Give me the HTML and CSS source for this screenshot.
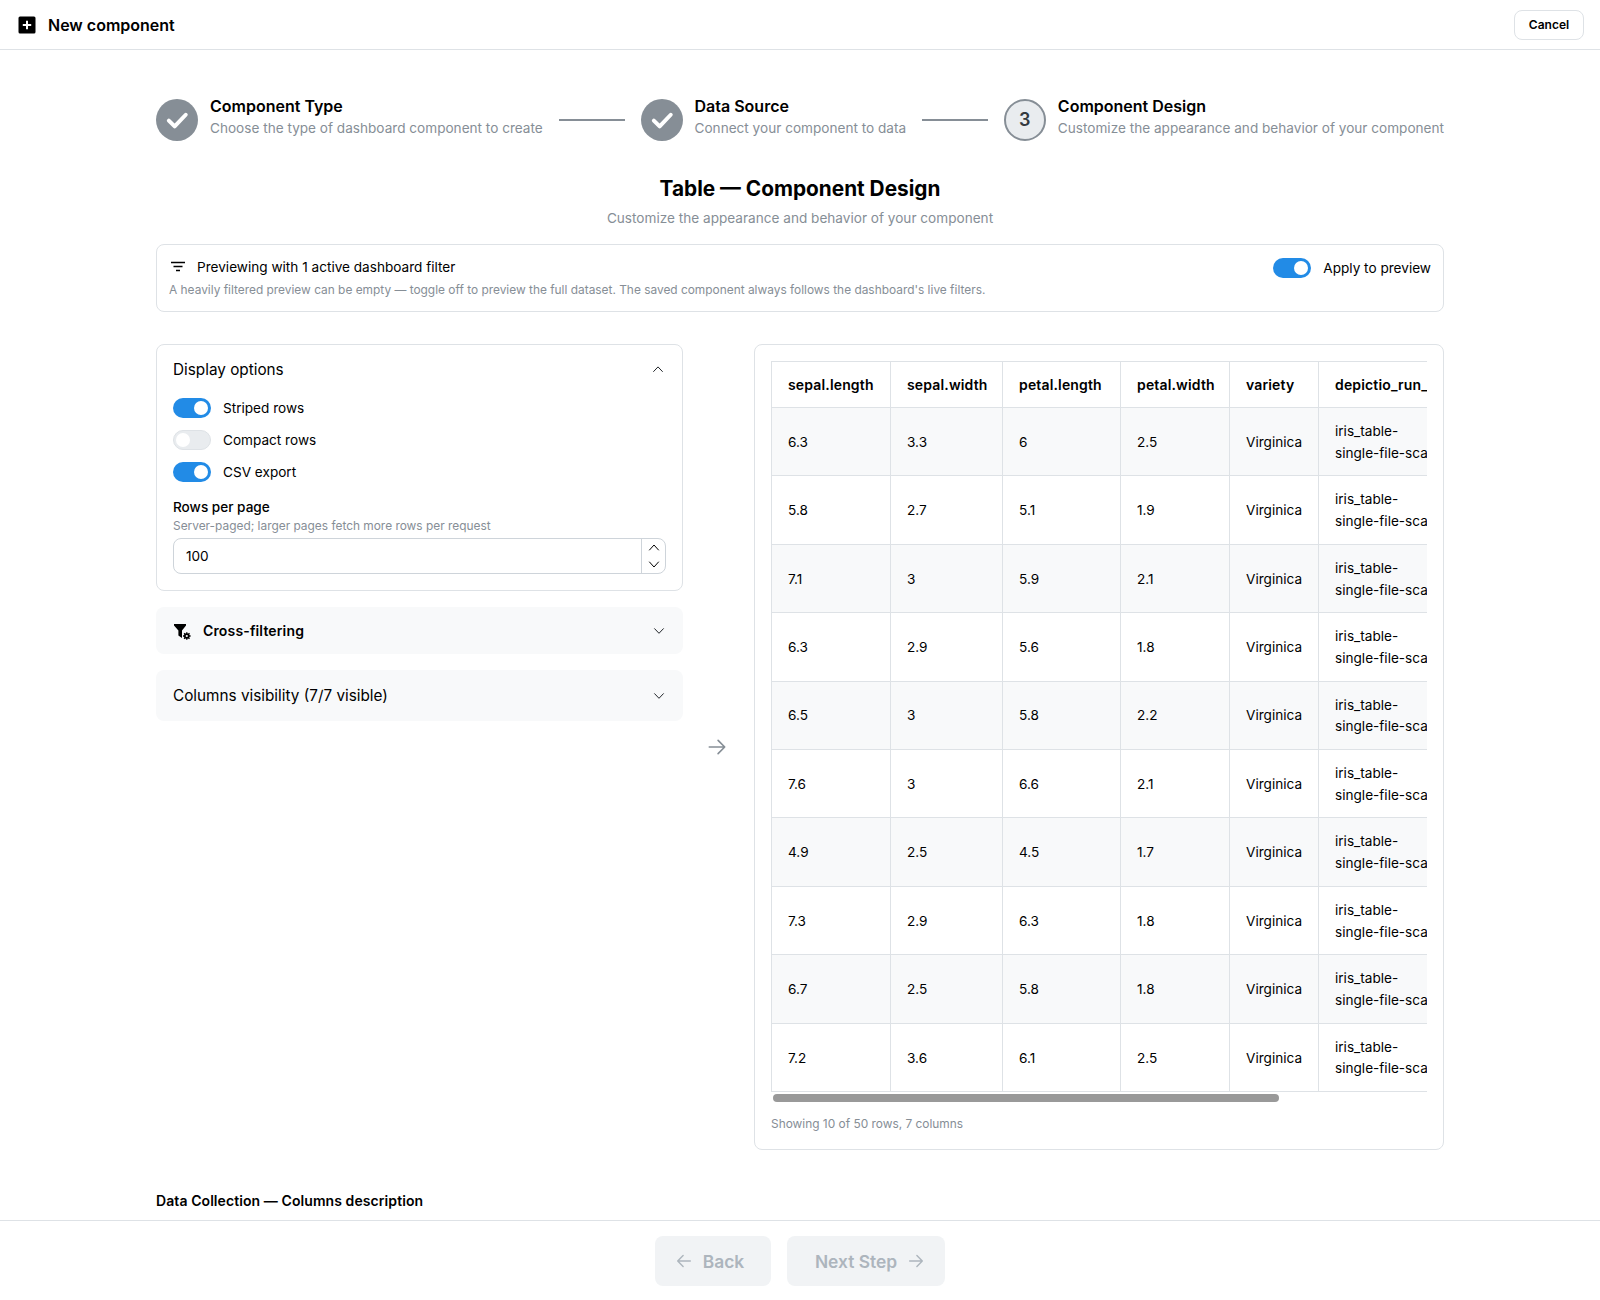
FILE: index.html
```html
<!DOCTYPE html>
<html lang="en">
<head>
<meta charset="utf-8">
<title>New component</title>
<link rel="stylesheet" href="styles.css">
</head>
<body>
<header class="topbar">
  <div class="topbar-title">
    <svg class="plus-icon" viewBox="0 0 18 18"><rect x="0.5" y="0.5" width="17" height="17" rx="1.5" fill="#000"/><path d="M9 4.8v8.4M4.8 9h8.4" stroke="#fff" stroke-width="2" fill="none"/></svg>
    <span>New component</span>
  </div>
  <button class="cancel">Cancel</button>
</header>
<main class="main">
  <div class="container">
    <div class="stepper">
      <div class="step">
        <span class="bullet done"><svg viewBox="0 0 24 24" class="check"><path d="M5 12.5l5 5L19.5 7.5" fill="none" stroke="#fff" stroke-width="3.4" stroke-linecap="round" stroke-linejoin="round"/></svg></span>
        <div class="step-text"><div class="step-title">Component Type</div><div class="step-desc">Choose the type of dashboard component to create</div></div>
      </div>
      <div class="connector"></div>
      <div class="step">
        <span class="bullet done"><svg viewBox="0 0 24 24" class="check"><path d="M5 12.5l5 5L19.5 7.5" fill="none" stroke="#fff" stroke-width="3.4" stroke-linecap="round" stroke-linejoin="round"/></svg></span>
        <div class="step-text"><div class="step-title">Data Source</div><div class="step-desc">Connect your component to data</div></div>
      </div>
      <div class="connector"></div>
      <div class="step">
        <span class="bullet current">3</span>
        <div class="step-text"><div class="step-title">Component Design</div><div class="step-desc">Customize the appearance and behavior of your component</div></div>
      </div>
    </div>

    <h1 class="heading">Table — Component Design</h1>
    <p class="subheading">Customize the appearance and behavior of your component</p>

    <section class="filter-box">
      <div class="filter-text">
        <div class="filter-line">
          <svg class="filter-icon" viewBox="0 0 16 12"><path d="M1 1.5h14M3.5 5.5h9M6 9.5h4" stroke="#000" stroke-width="1.5" fill="none"/></svg>
          <span>Previewing with 1 active dashboard filter</span>
        </div>
        <div class="filter-note">A heavily filtered preview can be empty — toggle off to preview the full dataset. The saved component always follows the dashboard's live filters.</div>
      </div>
      <div class="toggle-row"><span class="switch on"></span><span>Apply to preview</span></div>
    </section>

    <div class="design-grid">
      <div class="left-col">
        <section class="panel options">
          <div class="panel-head">
            <span class="panel-title">Display options</span>
            <svg class="chev chev-up" viewBox="0 0 16 16"><path d="M3.6 10.5l4.4-4.6 4.4 4.6" fill="none" stroke="#212529" stroke-width="1" stroke-linecap="round" stroke-linejoin="round"/></svg>
          </div>
          <div class="toggles">
            <div class="toggle-row"><span class="switch on"></span><span>Striped rows</span></div>
            <div class="toggle-row"><span class="switch off"></span><span>Compact rows</span></div>
            <div class="toggle-row"><span class="switch on"></span><span>CSV export</span></div>
          </div>
          <div class="field-label">Rows per page</div>
          <div class="field-desc">Server-paged; larger pages fetch more rows per request</div>
          <div class="number-input">
            <span class="number-value">100</span>
            <div class="number-steppers">
              <svg viewBox="0 0 16 16"><path d="M3.5 10.5l4.5-5 4.5 5" fill="none" stroke="#000" stroke-width="1" stroke-linecap="round" stroke-linejoin="round"/></svg>
              <svg viewBox="0 0 16 16"><path d="M3.5 5.5l4.5 5 4.5-5" fill="none" stroke="#000" stroke-width="1" stroke-linecap="round" stroke-linejoin="round"/></svg>
            </div>
          </div>
        </section>
        <section class="collapsed cross">
          <div class="cross-title">
            <svg class="cross-icon" viewBox="0 0 18 18"><path d="M1 2h12v1.4L9 8.4V16L5.4 13.4V8.4L1 3.4z" fill="#000"/><circle cx="13.8" cy="14" r="2.8" fill="#000"/><path d="M13.8 10.2v7.6M10 14h7.6M11.1 11.3l5.4 5.4M11.1 16.7l5.4-5.4" stroke="#000" stroke-width="1.3"/><circle cx="13.8" cy="14" r="1.1" fill="#f8f9fa"/></svg>
            <span>Cross-filtering</span>
          </div>
          <svg class="chev" viewBox="0 0 16 16"><path d="M3.6 5.7l4.4 4.6 4.4-4.6" fill="none" stroke="#212529" stroke-width="1" stroke-linecap="round" stroke-linejoin="round"/></svg>
        </section>
        <section class="collapsed columns">
          <span class="panel-title">Columns visibility (7/7 visible)</span>
          <svg class="chev" viewBox="0 0 16 16"><path d="M3.6 5.7l4.4 4.6 4.4-4.6" fill="none" stroke="#212529" stroke-width="1" stroke-linecap="round" stroke-linejoin="round"/></svg>
        </section>
      </div>

      <div class="arrow-col">
        <svg class="big-arrow" viewBox="0 0 20 20"><path d="M3 10h14M11 4l6 6-6 6" fill="none" stroke="#868e96" stroke-width="1.5" stroke-linecap="round" stroke-linejoin="round"/></svg>
      </div>

      <section class="panel preview">
        <div class="table-wrap">
          <table class="data">
            <colgroup><col class="c1"><col class="c2"><col class="c3"><col class="c4"><col class="c5"><col class="c6"></colgroup>
            <thead><tr><th>sepal.length</th><th>sepal.width</th><th>petal.length</th><th>petal.width</th><th>variety</th><th>depictio_run_id</th></tr></thead>
            <tbody>
              <tr><td>6.3</td><td>3.3</td><td>6</td><td>2.5</td><td>Virginica</td><td>iris_table-<br>single-file-scan</td></tr>
              <tr><td>5.8</td><td>2.7</td><td>5.1</td><td>1.9</td><td>Virginica</td><td>iris_table-<br>single-file-scan</td></tr>
              <tr><td>7.1</td><td>3</td><td>5.9</td><td>2.1</td><td>Virginica</td><td>iris_table-<br>single-file-scan</td></tr>
              <tr><td>6.3</td><td>2.9</td><td>5.6</td><td>1.8</td><td>Virginica</td><td>iris_table-<br>single-file-scan</td></tr>
              <tr><td>6.5</td><td>3</td><td>5.8</td><td>2.2</td><td>Virginica</td><td>iris_table-<br>single-file-scan</td></tr>
              <tr><td>7.6</td><td>3</td><td>6.6</td><td>2.1</td><td>Virginica</td><td>iris_table-<br>single-file-scan</td></tr>
              <tr><td>4.9</td><td>2.5</td><td>4.5</td><td>1.7</td><td>Virginica</td><td>iris_table-<br>single-file-scan</td></tr>
              <tr><td>7.3</td><td>2.9</td><td>6.3</td><td>1.8</td><td>Virginica</td><td>iris_table-<br>single-file-scan</td></tr>
              <tr><td>6.7</td><td>2.5</td><td>5.8</td><td>1.8</td><td>Virginica</td><td>iris_table-<br>single-file-scan</td></tr>
              <tr><td>7.2</td><td>3.6</td><td>6.1</td><td>2.5</td><td>Virginica</td><td>iris_table-<br>single-file-scan</td></tr>
            </tbody>
          </table>
        </div>
        <div class="scroll-track"><div class="scroll-thumb"></div></div>
        <div class="table-caption">Showing 10 of 50 rows, 7 columns</div>
      </section>
    </div>

    <h2 class="collection-title">Data Collection — Columns description</h2>
  </div>
</main>
<footer class="footer">
  <button class="nav-btn back"><svg viewBox="0 0 20 20"><path d="M17 10H3M9 4l-6 6 6 6" fill="none" stroke="#adb5bd" stroke-width="1.6" stroke-linecap="round" stroke-linejoin="round"/></svg><span>Back</span></button>
  <button class="nav-btn next"><span>Next Step</span><svg viewBox="0 0 20 20"><path d="M3 10h14M11 4l6 6-6 6" fill="none" stroke="#adb5bd" stroke-width="1.6" stroke-linecap="round" stroke-linejoin="round"/></svg></button>
</footer>
</body>
</html>
```
FILE: styles.css
```css
* { box-sizing: border-box; }
html, body { margin: 0; height: 100%; }
body {
  height: 1300px;
  overflow: hidden;
  display: flex;
  flex-direction: column;
  font-family: Inter, "Liberation Sans", sans-serif;
  font-size: 13.6px;
  line-height: 1.55;
  color: #000;
  background: #fff;
}
.topbar {
  flex: none;
  height: 50px;
  border-bottom: 1px solid #dee2e6;
  display: flex;
  align-items: center;
  justify-content: space-between;
  padding: 0 16px 0 18px;
}
.topbar-title { display: flex; align-items: center; gap: 12px; font-size: 16px; font-weight: 600; padding-top: 1px; }
.plus-icon { width: 18px; height: 18px; display: block; }
.cancel {
  height: 30px;
  width: 70px;
  padding: 0;
  border: 1px solid #dee2e6;
  border-radius: 8px;
  background: #fff;
  font: 600 12px Inter, sans-serif;
  color: #000;
}
.main { flex: 1; min-height: 0; overflow: hidden; }
.container { width: 1288px; margin: 0 auto; padding-top: 49px; }
.stepper { display: flex; align-items: center; gap: 16px; height: 42px; }
.step { display: flex; align-items: center; gap: 12px; flex: none; }
.bullet {
  width: 42px; height: 42px; border-radius: 50%;
  display: flex; align-items: center; justify-content: center; flex: none;
}
.bullet.done { background: #868e96; }
.check { width: 28px; height: 28px; display: block; }
.bullet.current { background: #e9ecef; border: 2px solid #868e96; color: #343a40; font-size: 18px; font-weight: 600; }
.step-text { display: flex; flex-direction: column; margin-top: -7px; }
.step-title { font-size: 16px; font-weight: 600; line-height: 22px; }
.step-desc { font-size: 13.6px; line-height: 22px; color: #868e96; }
.connector { flex: 1; height: 2px; background: #868e96; }
.heading { margin: 31px 0 0; font-size: 20.8px; font-weight: 700; line-height: 34px; text-align: center; }
.subheading { margin: 1px 0 0; font-size: 13.6px; line-height: 22px; color: #868e96; text-align: center; }
.filter-box {
  margin-top: 15px;
  height: 68px;
  border: 1px solid #dee2e6;
  border-radius: 8px;
  padding: 11px 12px 12px;
  display: flex;
  justify-content: space-between;
  align-items: flex-start;
}
.filter-line { display: flex; align-items: center; gap: 11px; line-height: 22px; padding-left: 1px; }
.filter-icon { width: 16px; height: 12px; display: block; }
.filter-note { font-size: 11.9px; line-height: 18px; color: #868e96; margin-top: 3px; }
.toggle-row { display: flex; align-items: center; gap: 12px; line-height: 20px; }
.filter-box .toggle-row { margin-top: 2px; }
.switch { position: relative; flex: none; display: block; width: 38px; height: 20px; border-radius: 10px; }
.switch::after { content: ""; position: absolute; top: 3px; width: 14px; height: 14px; border-radius: 50%; background: #fff; }
.switch.on { background: #228be6; }
.switch.on::after { right: 3px; }
.switch.off { background: #e9ecef; border: 1px solid #dee2e6; }
.switch.off::after { left: 2px; top: 2px; }
.design-grid { display: grid; grid-template-columns: 527px 71px 690px; margin-top: 32px; }
.left-col { display: flex; flex-direction: column; gap: 16px; }
.panel { border: 1px solid #dee2e6; border-radius: 8px; }
.options { padding: 16px; height: 247px; }
.panel-head { display: flex; justify-content: space-between; align-items: center; height: 18px; margin: 0 0 19px; }
.panel-title { font-size: 15.3px; line-height: 24px; }
.chev { width: 16px; height: 16px; display: block; flex: none; }
.chev-up { margin-top: -3px; }
.toggles { display: flex; flex-direction: column; gap: 12px; }
.field-label { font-weight: 500; line-height: 20px; margin-top: 15px; }
.field-desc { font-size: 11.9px; line-height: 18px; color: #868e96; }
.number-input {
  margin-top: 3px;
  height: 36px;
  border: 1px solid #ced4da;
  border-radius: 8px;
  display: flex;
  align-items: center;
  justify-content: space-between;
}
.number-value { padding: 2px 0 0 12px; }
.number-steppers { width: 24px; height: 34px; border-left: 1px solid #ced4da; display: flex; flex-direction: column; align-items: center; justify-content: center; }
.number-steppers svg { width: 16px; height: 17px; display: block; }
.collapsed { background: #f8f9fa; border-radius: 8px; display: flex; align-items: center; justify-content: space-between; padding: 0 16px 0 17px; }
.cross { height: 47px; }
.columns { height: 51px; }
.cross-title { display: flex; align-items: center; gap: 12px; font-size: 14px; font-weight: 600; letter-spacing: 0.15px; }
.cross-icon { width: 18px; height: 18px; display: block; margin-top: 1px; }
.arrow-col { display: flex; align-items: center; justify-content: center; padding-right: 3px; }
.big-arrow { width: 22px; height: 22px; display: block; }
.preview { padding: 16px; height: 806px; }
.table-wrap { overflow: hidden; }
.data { border-collapse: collapse; table-layout: fixed; width: 719px; }
.c1 { width: 119px; } .c2 { width: 112px; } .c3 { width: 118px; } .c4 { width: 109px; } .c5 { width: 89px; } .c6 { width: 172px; }
.data th, .data td { border: 1px solid #dee2e6; padding: 13px 16px 11px; text-align: left; white-space: nowrap; }
.data th { font-size: 14px; font-weight: 600; letter-spacing: 0.15px; padding-top: 0; padding-bottom: 0; height: 46px; }
.data td { line-height: 21.7px; }
.data tbody tr:nth-child(odd) td { background: #f8f9fa; }
.scroll-track { height: 8px; margin: 2px 0 0 2px; }
.scroll-thumb { width: 506px; height: 8px; border-radius: 4px; background: #999; }
.table-caption { font-size: 11.9px; line-height: 18px; color: #868e96; margin-top: 13px; }
.collection-title { margin: 40px 0 0; font-size: 14px; font-weight: 600; line-height: 22px; letter-spacing: 0.08px; }
.footer { flex: none; height: 80px; border-top: 1px solid #dee2e6; display: flex; justify-content: center; gap: 16px; padding-top: 15px; }
.nav-btn {
  height: 50px; border: 0; border-radius: 8px; background: #f1f3f5; color: #adb5bd;
  font: 600 17.4px Inter, sans-serif;
  display: flex; align-items: center; gap: 10px; padding: 0;
  justify-content: center;
}
.nav-btn svg { width: 18px; height: 18px; display: block; }
.back { width: 116px; padding-right: 7px; }
.next { width: 158px; padding-left: 8px; }
```
